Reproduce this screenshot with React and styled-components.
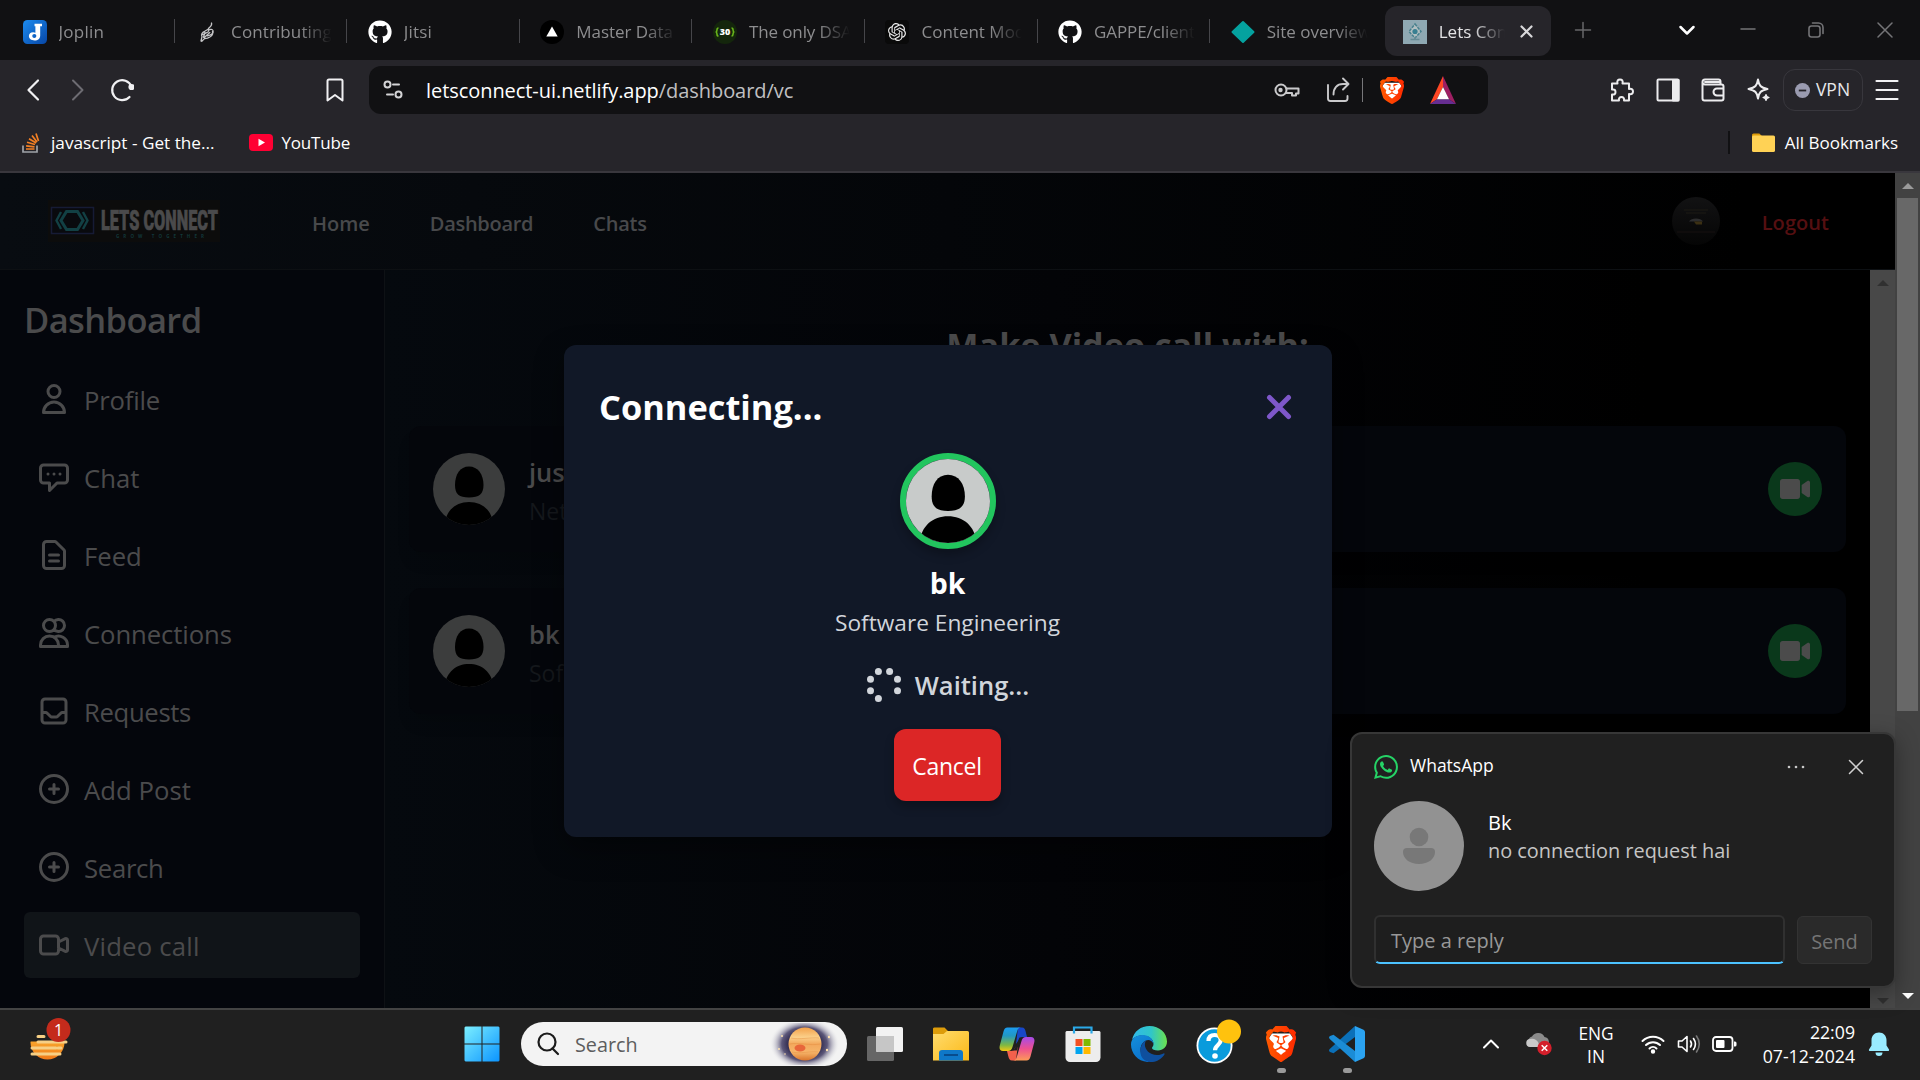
import React from "react";
import styled, { createGlobalStyle, css } from "styled-components";
import {
  HiOutlineUser,
  HiOutlineChatAlt,
  HiOutlineDocumentText,
  HiOutlineUsers,
  HiOutlineInbox,
  HiOutlinePlusCircle,
  HiOutlineVideoCamera,
} from "react-icons/hi";
import { FaVideo, FaGithub } from "react-icons/fa";
import { SiOpenai, SiBrave, SiWhatsapp } from "react-icons/si";

const Global = createGlobalStyle`
  *, *::before, *::after { box-sizing: border-box; }
  html, body { margin: 0; padding: 0; background: #000; overflow: hidden; }
  body { font-family: "Open Sans", "Noto Sans", sans-serif; }
  svg { display: block; flex: none; }
`;

const Screen = styled.div`
  position: relative;
  width: 1920px;
  height: 1080px;
  display: flex;
  flex-direction: column;
  overflow: hidden;
`;

const Label = styled.span`
  font-size: ${(p) => p.$size}px;
  font-weight: ${(p) => p.$weight || 400};
  letter-spacing: ${(p) => p.$track || 0}px;
  color: ${(p) => p.$color || "#fff"};
  line-height: ${(p) => p.$line || Math.round(p.$size * 1.4)}px;
  padding-top: ${(p) => p.$drop || 0}px;
  padding-bottom: ${(p) => p.$lift || 0}px;
  margin-right: ${(p) => p.$after || 0}px;
  white-space: nowrap;
`;

/* ---------- browser chrome ---------- */

const TabStrip = styled.div`
  height: 60px;
  flex: none;
  display: flex;
  align-items: flex-start;
  padding: 6px 0 0 2px;
  background: #111113;
`;

const Tab = styled.div`
  width: 172.6px;
  height: 50px;
  flex: none;
  display: flex;
  align-items: center;
  gap: 12px;
  padding: 1px 0 0 20.5px;
  position: relative;
  &::after {
    content: "";
    position: absolute;
    right: 0;
    top: 13px;
    width: 1px;
    height: 24px;
    background: ${(p) => (p.$last ? "transparent" : "#46464a")};
  }
`;

const ActiveTab = styled.div`
  width: 166px;
  height: 50px;
  flex: none;
  display: flex;
  align-items: center;
  gap: 12px;
  margin-left: 2px;
  padding: 1px 0 0 18px;
  border-radius: 12px;
  background: #26252a;
`;

const TabTitle = styled(Label)`
  width: ${(p) => p.$w}px;
  overflow: hidden;
  mask-image: linear-gradient(to right, #000 ${(p) => p.$w - 32}px, transparent);
`;

const WindowControls = styled.div`
  flex: 1;
  height: 47px;
  display: flex;
  align-items: center;
`;

const Control = styled.div`
  width: ${(p) => p.$w}px;
  margin-left: ${(p) => p.$before || 0}px;
  display: flex;
  justify-content: center;
`;

const Toolbar = styled.div`
  height: 60px;
  flex: none;
  display: flex;
  align-items: center;
  padding: 0 21px 0 22px;
  background: #26252a;
`;

const NavButtons = styled.div`
  width: 347px;
  display: flex;
  align-items: center;
  gap: 20px;
`;

const BookmarkButton = styled.div`
  margin-left: auto;
  margin-right: 22.5px;
`;

const AddressBar = styled.div`
  width: 1119px;
  height: 48px;
  display: flex;
  align-items: center;
  padding: 0 32px 0 14px;
  border-radius: 12px;
  background: #111113;
`;

const Url = styled.div`
  flex: 1;
  padding: 2px 0 0 23px;
`;

const AddressActions = styled.div`
  display: flex;
  align-items: center;
  gap: 26px;
`;

const ActionPair = styled.div`
  display: flex;
  align-items: center;
  gap: 17px;
`;

const Divider = styled.div`
  width: ${(p) => p.$w || 1}px;
  height: ${(p) => p.$h}px;
  margin-left: ${(p) => p.$shift || 0}px;
  background: ${(p) => p.$color};
`;

const ToolbarActions = styled.div`
  flex: 1;
  display: flex;
  align-items: center;
  justify-content: flex-end;
`;

const Extensions = styled.div`
  display: flex;
  gap: 21.5px;
  margin-right: 12px;
`;

const VpnButton = styled.div`
  width: 80px;
  height: 42px;
  display: flex;
  align-items: center;
  justify-content: center;
  gap: 6px;
  margin-right: 12.5px;
  border: 1px solid #38373d;
  border-radius: 12px;
`;

const BookmarksBar = styled.div`
  height: 53px;
  flex: none;
  display: flex;
  align-items: center;
  padding: 0 22px 6px 22px;
  background: #26252a;
  border-bottom: 2px solid #39373d;
`;

const Bookmark = styled.div`
  display: flex;
  align-items: center;
  gap: ${(p) => p.$gap}px;
  margin-right: ${(p) => p.$after || 0}px;
`;

const AllBookmarks = styled.div`
  margin-left: auto;
  display: flex;
  align-items: center;
  gap: 22px;
`;

/* ---------- web page ---------- */

const Page = styled.div`
  height: 835px;
  flex: none;
  display: flex;
`;

const Site = styled.div`
  position: relative;
  width: 1895px;
  display: flex;
  flex-direction: column;
`;

const SiteNav = styled.header`
  height: 97px;
  flex: none;
  display: flex;
  align-items: center;
  padding: 0 66px 0 48px;
  border-bottom: 1px solid #0d1013;
  background: linear-gradient(to right, #080c11, #040609 50%, #000 92%);
`;

const SiteLinks = styled.nav`
  display: flex;
  gap: 60px;
  margin-left: 92px;
  padding-top: 5px;
`;

const Account = styled.div`
  margin-left: auto;
  display: flex;
  align-items: center;
  gap: 42px;
`;

const SiteBody = styled.div`
  flex: 1;
  display: flex;
`;

const Sidebar = styled.aside`
  width: 385px;
  flex: none;
  padding: 23px 24px 0;
  background: #04060c;
  border-right: 1px solid #0e1115;
`;

const SidebarTitle = styled.h2`
  margin: 0 0 19px;
  height: 54px;
  font-size: 34.5px;
  font-weight: 600;
  line-height: 54px;
  letter-spacing: -0.6px;
  color: #4b4b4c;
`;

const Menu = styled.ul`
  margin: 0;
  padding: 0;
  list-style: none;
  display: flex;
  flex-direction: column;
  gap: 12px;
`;

const MenuItem = styled.li`
  height: 66px;
  display: flex;
  align-items: center;
  gap: 12px;
  padding-left: 12px;
  border-radius: 6px;
  color: #4b4b4c;
  background: ${(p) => (p.$active ? "#101418" : "transparent")};
`;

const Main = styled.main`
  width: 1485px;
  display: flex;
  flex-direction: column;
  align-items: center;
  padding: 46px 24px 0;
  background: linear-gradient(to right, #05090e, #030407 45%, #000 85%);
`;

const MainTitle = styled.h1`
  margin: 0 0 56px;
  padding-top: 2px;
  height: 54px;
  font-size: 34.2px;
  font-weight: 700;
  line-height: 54px;
  color: #4b4b4c;
  white-space: nowrap;
`;

const People = styled.div`
  align-self: stretch;
  display: flex;
  flex-direction: column;
  gap: 36px;
`;

const PersonCard = styled.div`
  height: 126px;
  display: flex;
  align-items: center;
  padding: 0 24px;
  border-radius: 12px;
  background: #04060b;
  box-shadow: 0 12px 16px -4px rgba(0, 0, 0, 0.15);
`;

const PersonText = styled.div`
  display: flex;
  flex-direction: column;
  margin-left: 24px;
  padding-top: 2px;
`;

const CallButton = styled.div`
  width: 54px;
  height: 54px;
  margin-left: auto;
  display: flex;
  align-items: center;
  justify-content: center;
  border-radius: 50%;
  color: #4b4b4b;
  background: #0a381b;
`;

const InnerScroll = styled.div`
  width: 25px;
  display: flex;
  flex-direction: column;
  align-items: center;
  justify-content: space-between;
  padding: 10px 0 4px;
  background: #484848;
`;

const OuterScroll = styled.div`
  width: 25px;
  display: flex;
  flex-direction: column;
  align-items: center;
  background: #424242;
`;

const ScrollThumb = styled.div`
  width: 21px;
  height: 513px;
  margin-top: 9px;
  background: #686868;
`;

const Arrow = styled.div`
  width: 0;
  height: 0;
  border: 6px solid transparent;
  ${(p) =>
    p.$down
      ? css`border-top-color: ${p.$color}; border-bottom-width: 0;`
      : css`border-bottom-color: ${p.$color}; border-top-width: 0;`}
  margin-top: ${(p) => p.$top || 0}px;
`;

/* ---------- call modal ---------- */

const ModalLayer = styled.div`
  position: absolute;
  inset: 0;
  display: flex;
  justify-content: center;
  align-items: flex-start;
  padding: 172px 0 0 1px;
`;

const Modal = styled.div`
  width: 768px;
  height: 492px;
  display: flex;
  flex-direction: column;
  align-items: center;
  padding: 35px 36px 0 35px;
  border-radius: 12px;
  background: #111827;
  box-shadow: 0 12px 30px rgba(0, 0, 0, 0.4);
`;

const ModalHead = styled.div`
  align-self: stretch;
  height: 54px;
  display: flex;
  align-items: center;
  justify-content: space-between;
  padding: 0 4px 0 0;
  margin-bottom: 19px;
`;

const AvatarRing = styled.div`
  width: 96px;
  height: 96px;
  margin-bottom: 13px;
  border: 6px solid #22c55e;
  border-radius: 50%;
  box-shadow: 0 6px 10px rgba(0, 0, 0, 0.25);
`;

const Waiting = styled.div`
  display: flex;
  align-items: center;
  gap: 13px;
  margin: 23.5px 0 24.5px;
  height: 40px;
`;

const CancelButton = styled.button`
  width: 107px;
  height: 72px;
  padding: 2px 0 0;
  margin-right: 1px;
  border: 0;
  border-radius: 12px;
  background: #dc2626;
  color: #fff;
  font-family: inherit;
  font-size: 23px;
  letter-spacing: -0.25px;
  box-shadow: 0 6px 10px rgba(0, 0, 0, 0.25);
`;

/* ---------- notification ---------- */

const Toast = styled.section`
  position: absolute;
  left: 1350px;
  top: 732px;
  width: 546px;
  height: 256px;
  display: flex;
  flex-direction: column;
  padding: 16px 22px 0 22px;
  border: 2px solid #373737;
  border-radius: 12px;
  background: #202020;
  box-shadow: 0 6px 22px rgba(0, 0, 0, 0.35);
`;

const ToastHead = styled.div`
  height: 33px;
  display: flex;
  align-items: center;
  gap: 12px;
  padding-right: 8px;
`;

const ToastActions = styled.div`
  margin-left: auto;
  display: flex;
  align-items: center;
  gap: 43px;
`;

const ToastBody = styled.div`
  height: 90px;
  display: flex;
  gap: 24px;
  margin-top: 18px;
`;

const ToastText = styled.div`
  display: flex;
  flex-direction: column;
  padding-top: 8px;
`;

const ToastReply = styled.div`
  height: 49px;
  margin-top: 24px;
  display: flex;
  gap: 12px;
`;

const ReplyInput = styled.div`
  width: 411px;
  display: flex;
  align-items: center;
  padding: 3px 0 0 15px;
  border: 2px solid #303030;
  border-bottom: 2px solid #4cc2ff;
  border-radius: 6px;
  background: #1e1e1e;
`;

const SendButton = styled.div`
  width: 75px;
  display: flex;
  align-items: center;
  justify-content: center;
  padding-top: 4px;
  margin-top: 1px;
  border: 1px solid #333;
  border-radius: 6px;
  background: #2a2a2a;
`;

/* ---------- taskbar ---------- */

const Taskbar = styled.footer`
  height: 72px;
  flex: none;
  display: flex;
  align-items: center;
  padding-bottom: 2px;
  border-top: 2px solid #434343;
  background: #202020;
`;

const Widgets = styled.div`
  width: 460px;
  padding: 0 0 2px 26px;
`;

const Apps = styled.div`
  display: flex;
  align-items: center;
  gap: 22px;
`;

const AppSlot = styled.div`
  position: relative;
  width: 44px;
  height: 68px;
  display: flex;
  align-items: center;
  justify-content: center;
  &::after {
    content: "";
    position: absolute;
    bottom: 5px;
    width: 9px;
    height: 5px;
    border-radius: 3px;
    background: ${(p) => (p.$running ? "#9a9a9a" : "transparent")};
  }
`;

const SearchBox = styled.div`
  width: 326px;
  height: 44px;
  display: flex;
  align-items: center;
  gap: 15px;
  margin: 0 -6px 0 -5px;
  padding: 0 7px 0 15px;
  border-radius: 22px;
  background: #f3f3f3;
`;

const SearchArt = styled.div`
  margin-left: auto;
`;

const Tray = styled.div`
  margin-left: auto;
  display: flex;
  align-items: center;
  padding-right: 18px;
`;

const TrayIcon = styled.div`
  width: ${(p) => p.$w}px;
  display: flex;
  justify-content: center;
`;

const TrayLines = styled.div`
  width: ${(p) => p.$w}px;
  padding-top: ${(p) => p.$drop || 0}px;
  display: flex;
  flex-direction: column;
  align-items: ${(p) => p.$align || "center"};
`;

/* ---------- drawings ---------- */

const Line = ({ size = 24, h, d, w = 2, color = "#e6e6e8", box, children }) => (
  <svg width={size} height={h || size} viewBox={box || `0 0 ${size} ${h || size}`} fill="none" stroke={color} strokeWidth={w} strokeLinecap="round" strokeLinejoin="round">
    {d && <path d={d} />}
    {children}
  </svg>
);

const Joplin = () => (
  <svg width="24" height="24" viewBox="0 0 24 24">
    <defs>
      <linearGradient id="jop" x1="0" y1="0" x2="1" y2="1"><stop offset="0" stopColor="#1c8cf0" /><stop offset="1" stopColor="#0746a6" /></linearGradient>
    </defs>
    <rect width="24" height="24" rx="4.500" fill="url(#jop)" />
    <path d="M11.5 3.700h7.500v2.600h-1.800v9.200c0 3-2.200 5-5.600 5-3.400 0-5.700-1.800-5.700-4.400 0-2.300 1.700-3.900 4.200-3.900 1 0 1.800.2 2.300.5V6.300h-.9z M9.300 16.100c0 1.200.9 1.900 2 1.900s2-.8 2-2-.8-1.900-2-1.900-2 .8-2 2z" fill="#fff" fillRule="evenodd" />
  </svg>
);

const JitsiMark = () => (
  <svg width="24" height="24" viewBox="0 0 24 24" fill="none" stroke="#c4c4c6" strokeWidth="1.300" strokeLinejoin="round" strokeLinecap="round">
    <path d="M16.500 3c.6 2-.2 3-1.800 4.200-1.400 1-2 2-1 3.500M13.600 10c2-1 4-.7 4.500.9.500 2.400-2.600 4.300-5.600 5M17.500 11.500c.8 3-1.700 5.500-5 6.700l-3 .4-2.700 2.600M6 21l1-4.400c-1.200-2 .2-4.200 2.700-5.300l3-1.800M10 12.500l-1.500 4.800M14.800 12.500l-5.500 5M8 14.600l5.300-2.800" />
  </svg>
);

const Triangle = () => (
  <svg width="24" height="24" viewBox="0 0 24 24"><circle cx="12" cy="12" r="12" fill="#000" /><path d="M12 6.500 17.700 16.500H6.300z" fill="#fff" /></svg>
);

const Thirty = () => (
  <svg width="24" height="24" viewBox="0 0 24 24">
    <circle cx="12" cy="12" r="12" fill="#14260c" />
    <path d="M5.500 8c-1.500 0-1.500.9-1.500 1.800 0 1.300 0 1.900-1.200 2.200C4 12.300 4 13 4 14.200c0 1 0 1.800 1.500 1.800M18.500 8c1.500 0 1.500.9 1.500 1.800 0 1.300 0 1.900 1.200 2.200C20 12.300 20 13 20 14.200c0 1 0 1.800-1.500 1.800" fill="none" stroke="#69b61b" strokeWidth="1.600" />
    <text x="12" y="15.200" textAnchor="middle" fontFamily="Open Sans, sans-serif" fontWeight="800" fontSize="9" fill="#fff">30</text>
  </svg>
);

const OpenAiTile = () => (
  <svg width="24" height="24" viewBox="0 0 24 24"><rect width="24" height="24" rx="4" fill="#0a0a0a" /><SiOpenai x="3" y="3" size={18} color="#e8e8e8" /></svg>
);

const Diamond = () => (
  <svg width="24" height="24" viewBox="0 0 24 24"><path d="M12 2 22.500 12 12 22 1.500 12z" fill="#05a29f" stroke="#05a29f" strokeWidth="2" strokeLinejoin="round" /></svg>
);

const SiteFavicon = () => (
  <svg width="24" height="24" viewBox="0 0 24 24">
    <rect width="24" height="24" fill="#8fa9b3" />
    <path d="M12 4 18 11.500 12 18 6 11.500z" fill="#b2bfc1" stroke="#47808d" strokeWidth="1.500" strokeDasharray="3 1" />
    <circle cx="12" cy="11.500" r="2.600" fill="#387f91" />
    <path d="M12 17v2M7.500 19.500h9" stroke="#668b95" strokeWidth="1.300" />
  </svg>
);

const BraveLion = ({ w, h, id }) => (
  <svg width={w} height={h} viewBox="2 0 20 24" preserveAspectRatio="none">
    <defs><linearGradient id={id}><stop offset="0" stopColor="#ff5a00" /><stop offset="1" stopColor="#ff2a00" /></linearGradient></defs>
    <path d="M6 5h12l2 3-2.500 10-5.500 4-5.500-4L4 8z" fill="#fff" />
    <SiBrave size={24} style={{ fill: `url(#${id})` }} />
  </svg>
);

const Bat = () => (
  <svg width="26" height="28" viewBox="0 0 27 28" preserveAspectRatio="none">
    <path d="M13.500 0 0 28l7.200-4.700L13.500 11z" fill="#ff4724" />
    <path d="M13.500 0 27 28l-7.200-4.700L13.500 11z" fill="#9e1f63" />
    <path d="M0 28h27l-7.200-4.700H7.200z" fill="#662d91" />
    <path d="M13.500 11 19.800 23.300H7.200z" fill="#fff" />
  </svg>
);

const YouTubeBadge = () => (
  <svg width="24" height="17" viewBox="0 0 24 17"><rect width="24" height="17" rx="4" fill="#ff0033" /><path d="M9.500 4.800 16 8.500l-6.500 3.700z" fill="#fff" /></svg>
);

const StackOverflow = () => (
  <svg width="18" height="20" viewBox="0 0 18 20" fill="none" strokeWidth="1.700">
    <path d="M1 12.500V19h14v-6.500" stroke="#9fa3a8" />
    <path d="M4 16h8.500M4.100 12.900l8.400.9M5 9.300l8 2.200M7 5.700l7.200 4.200M10 2.400l5 6.600M14 .5l2.500 7.500" stroke="#f48024" />
  </svg>
);

const Folder = ({ w, h }) => (
  <svg width={w} height={h} viewBox="0 0 22 19" preserveAspectRatio="none">
    <path d="M0 2a1.500 1.500 0 0 1 1.500-1.500H7L9.500 3H20v6H0z" fill="#dd9c0a" />
    <rect y="2.500" width="22" height="16.500" rx="1.500" fill="#ffd255" />
  </svg>
);

const Logo = () => (
  <svg width="172" height="42" viewBox="0 0 172 42">
    <rect width="172" height="42" fill="#0c0c0c" />
    <rect x="3.500" y="7.500" width="42" height="26" fill="#090a0e" stroke="#161b35" strokeWidth="1.500" />
    <g fill="none" stroke="#124044" strokeWidth="2.400">
      <path d="M18.500 11.500h11L35 20.500l-5.500 9h-11L13 20.500z" strokeWidth="3" />
      <path d="M13 12l-4.500 8.500L13 29M35 12l4.500 8.500L35 29" />
    </g>
    <text x="53" y="29.500" textLength="117" lengthAdjust="spacingAndGlyphs" fontFamily="Roboto, sans-serif" fontWeight="900" fontSize="28" fill="#4a4a4b" stroke="#4a4a4b" strokeWidth=".7">LETS CONNECT</text>
    <text x="68" y="37.500" textLength="88" fontFamily="Open Sans, sans-serif" fontWeight="700" fontSize="4.500" fill="#12383b">GROW TOGETHER</text>
  </svg>
);

const AccountPhoto = () => (
  <svg width="48" height="48" viewBox="0 0 48 48">
    <defs><linearGradient id="acc" x2="0" y2="1"><stop offset="0" stopColor="#121213" /><stop offset="1" stopColor="#050505" /></linearGradient></defs>
    <circle cx="24" cy="24" r="24" fill="url(#acc)" />
    <path d="M12 13h24M14 16h20" stroke="#1d1a14" />
    <path d="M17 24.500c2-4 12-4 14 0z" fill="#2d2d2e" />
    <path d="M22 24.500h8v3h-6z" fill="#3c3013" />
    <path d="M5 35h38" stroke="#171010" />
  </svg>
);

const Silhouette = ({ size, tone, id }) => (
  <svg width={size} height={size} viewBox="0 0 72 72">
    <clipPath id={id}><circle cx="36" cy="36" r="36" /></clipPath>
    <g clipPath={`url(#${id})`}>
      <rect width="72" height="72" fill={tone} />
      <path d="M36 13.500c9 0 14.500 8 14.500 18.500C50.500 41 46 44.500 36 44.500S22 41 22 32C22 21.500 27 13.500 36 13.500z" fill="#000" />
      <path d="M11.500 72C13 57 23 49 36 49s23 8 24.500 23z" fill="#000" />
    </g>
  </svg>
);

const Spinner = () => (
  <svg width="36" height="36" viewBox="-18 -18 36 36" fill="#d1d5db">
    {[[-5.600, -13.500], [5.600, -13.500], [-13.500, -5.700], [13.500, -5.700], [-13.500, 5.700], [13.500, 5.700], [-5.600, 13.500]].map(([x, y]) => (
      <circle key={`${x}${y}`} cx={x} cy={y} r="3.500" />
    ))}
  </svg>
);

const Contact = () => (
  <svg width="90" height="90" viewBox="0 0 90 90">
    <circle cx="45" cy="45" r="45" fill="#929292" />
    <circle cx="45" cy="36" r="9.300" fill="#787878" />
    <path d="M33 47h24a4 4 0 0 1 4 4c0 7-7 12-16 12s-16-5-16-12a4 4 0 0 1 4-4z" fill="#787878" />
  </svg>
);

const Weather = () => (
  <svg width="48" height="46" viewBox="0 0 48 46" overflow="visible">
    <defs><linearGradient id="sun" x2="0" y2="1"><stop offset="0" stopColor="#ffc83d" /><stop offset="1" stopColor="#f07a18" /></linearGradient></defs>
    <circle cx="21.500" cy="22.500" r="17" fill="url(#sun)" />
    <path d="M0 0h48v21.500H0z" fill="#202020" />
    <path d="M12 16.500h6M12 22h28M6 28h24M6 34h28" stroke="#f6cf85" strokeWidth="3" strokeLinecap="round" />
    <path d="M32 28h3" stroke="#f6cf85" strokeWidth="3" strokeLinecap="round" />
    <circle cx="32.500" cy="10" r="12" fill="#c42b1c" />
    <text x="32.500" y="16" textAnchor="middle" fontFamily="Open Sans, sans-serif" fontSize="16" fill="#fff">1</text>
  </svg>
);

const Windows = () => (
  <svg width="36" height="36" viewBox="0 0 36 36">
    <defs><linearGradient id="win" gradientUnits="userSpaceOnUse" x2="36" y2="36"><stop offset="0" stopColor="#7df0ff" /><stop offset="1" stopColor="#0a93ff" /></linearGradient></defs>
    <path d="M1.500.5H17.500V17.500H.5V1.500zM18.500.5H34.500L35.500 1.500V17.500H18.500zM.5 18.500H17.500V35.500H1.500L.5 34.500zM18.500 18.500H35.500V34.500L34.500 35.500H18.500z" fill="url(#win)" />
  </svg>
);

const Planet = () => (
  <svg width="70" height="42" viewBox="0 0 70 42">
    <defs>
      <radialGradient id="space"><stop offset="0.450" stopColor="#2f2a4f" /><stop offset="0.650" stopColor="#5c5779" /><stop offset="1" stopColor="#f3f3f3" stopOpacity="0" /></radialGradient>
      <linearGradient id="jup" x2="0" y2="1"><stop offset="0" stopColor="#f3a14a" /><stop offset="0.300" stopColor="#fbd08a" /><stop offset="0.500" stopColor="#f3a85c" /><stop offset="0.750" stopColor="#f6b56a" /><stop offset="1" stopColor="#d9752b" /></linearGradient>
    </defs>
    <ellipse cx="34.500" cy="21" rx="35" ry="26" fill="url(#space)" />
    <circle cx="35" cy="21" r="16.500" fill="url(#jup)" />
    <path d="M21 15c8 2 20-1 28 0M19.500 21c9-2 20 2 31 0M22 29c8 2 18-1 26 0" stroke="#e08a3c" strokeWidth="1" fill="none" opacity=".4" />
    <ellipse cx="30" cy="25" rx="5.500" ry="3.500" fill="#e8663a" />
    <g fill="#ffe2b0"><circle cx="12" cy="13" r="1" /><circle cx="59" cy="14" r="1.200" /><circle cx="57" cy="27" r="1.200" /><circle cx="9" cy="26" r="1" /><circle cx="15" cy="31" r=".8" /></g>
  </svg>
);

const TaskView = () => (
  <svg width="36" height="34" viewBox="0 0 36 34">
    <rect y="9" width="27" height="25" rx="1.500" fill="#666" />
    <rect x="9" width="27" height="25" rx="1.500" fill="#f2f2f2" />
    <path d="M9 9h18v16H10.500L9 23.500z" fill="#c6c6c6" />
  </svg>
);

const Explorer = () => (
  <svg width="36" height="34" viewBox="0 0 36 34">
    <defs><linearGradient id="exp" x2="1" y2="1"><stop offset="0" stopColor="#ffdc6e" /><stop offset="1" stopColor="#fbb917" /></linearGradient></defs>
    <path d="M0 1.500A1.500 1.500 0 0 1 1.500.5H11.500L15 4v5H0z" fill="#dd9c0a" />
    <path d="M0 7h10.500L14 4h20.500A1.500 1.500 0 0 1 36 5.500V33.500H0z" fill="url(#exp)" />
    <path d="M6 33.500V26a3 3 0 0 1 3-3H27a3 3 0 0 1 3 3v7.500z" fill="#0f78c8" />
    <path d="M11 28H25" stroke="#084c8d" strokeWidth="2" />
  </svg>
);

const Copilot = () => (
  <svg width="36" height="34" viewBox="0 0 36 34">
    <defs>
      <linearGradient id="cpA" x2="0" y2="1"><stop offset="0" stopColor="#1c9cf0" /><stop offset=".35" stopColor="#2198c4" /><stop offset=".75" stopColor="#7fb843" /><stop offset="1" stopColor="#f2c811" /></linearGradient>
      <linearGradient id="cpB" x2="0" y2="1"><stop offset="0" stopColor="#a54bea" /><stop offset=".5" stopColor="#ee5090" /><stop offset="1" stopColor="#fd9a57" /></linearGradient>
    </defs>
    <path d="M19 .5h4c2.500 0 3 2 3.500 3.500L28 10h-4c-2.500 0-3.500 1-4 3l-3 4z" fill="#1747c8" />
    <path d="M17 33.500h-4c-2.500 0-3-2-3.500-3.500L8 24h4c2.500 0 3.500-1 4-3l3-4z" fill="#f2604c" />
    <path d="M8.500.5H22c-2 0-3 1.200-3.600 3L13.500 20c-.8 2.600-2 4-4.500 4H4C1 24 0 21.500.8 18.500L4.500 4.500C5.200 2 6.300.5 8.500.5z" fill="url(#cpA)" />
    <path d="M27.500 33.500H14c2 0 3-1.200 3.600-3L22.500 14c.8-2.600 2-4 4.500-4h5c3 0 4 2.500 3.200 5.500l-3.700 14c-.7 2.500-1.800 4-4 4z" fill="url(#cpB)" />
    <path d="M20.500 10.500h3.200c-1.700.8-2.500 2-3 3.700L17.800 23.500h-4c1.300-.8 2-1.800 2.500-3.500z" fill="#202020" />
  </svg>
);

const Store = () => (
  <svg width="36" height="36" viewBox="0 0 36 36">
    <path d="M9 8V1.500H26.500V8" fill="none" stroke="#2ba9e8" strokeWidth="2.200" />
    <path d="M1.500 5H34.500L35.500 6V31.500a4.500 4.500 0 0 1-4.500 4.500H5A4.500 4.500 0 0 1 .5 31.500V6z" fill="#ededed" />
    <path d="M9 5V7.500M26.500 5V7.500" stroke="#2ba9e8" strokeWidth="2.200" />
    <path d="M10.500 13h7v7h-7z" fill="#f25022" /><path d="M18.500 13h7v7h-7z" fill="#7fba00" />
    <path d="M10.500 21h7v7h-7z" fill="#00a4ef" /><path d="M18.500 21h7v7h-7z" fill="#ffb900" />
  </svg>
);

const Edge = () => (
  <svg width="36" height="36" viewBox="0 0 36 36">
    <defs>
      <linearGradient id="edA"><stop offset="0" stopColor="#31b9ea" /><stop offset=".55" stopColor="#30c6c8" /><stop offset="1" stopColor="#6be24e" /></linearGradient>
      <linearGradient id="edB" x2=".6" y2="1"><stop offset="0" stopColor="#1590dc" /><stop offset="1" stopColor="#0a6fcb" /></linearGradient>
    </defs>
    <path d="M1 14C3 5 10 0 18.500 0 28.500 0 36 7 36 15.500c0 5.500-4 9-9 9-3.500 0-6-1-6-2.500 0-1 1.500-1.500 1.500-4C22.500 13 17.500 9.500 11.500 9.500 6.500 9.500 2.500 11.500 1 14z" fill="url(#edA)" />
    <path d="M0 18.500c0-6 5-9.500 11.500-9.500 7 0 11 4.500 11 9 0 0-1.500-4-5-4-4.500 0-8 4.500-8 9.500C9.500 30 14 35 20 36 8.500 37 0 28.500 0 18.500z" fill="url(#edB)" />
    <path d="M15 14.500c-3.500 5.500 1.500 14.500 11 14.500 3 0 5-.8 6.500-1.600 1-.4 1.400.5.9 1.200C30.500 33.500 25 36.500 19 36 12 35 8.500 29.500 9.500 23c.7-4.500 3-7.500 5.500-8.500z" fill="#0e4f9e" />
  </svg>
);

const Help = () => (
  <svg width="46" height="46" viewBox="0 0 46 46" overflow="visible">
    <circle cx="22.500" cy="24.500" r="18" fill="#fff" />
    <circle cx="22.500" cy="24.500" r="16.200" fill="#0a9bdc" />
    <path d="M16.500 20c0-4 2.500-6 6.200-6s6 2.200 6 5.300c0 4.700-5.700 4.700-5.700 10" fill="none" stroke="#fff" strokeWidth="4.200" />
    <circle cx="23" cy="35" r="2.800" fill="#fff" />
    <circle cx="37" cy="10.500" r="12" fill="#ffc20e" />
  </svg>
);

const VsCode = () => (
  <svg width="36" height="36" viewBox="0 0 36 36">
    <path d="M26 0v11L4.500 27.300 1 26c-1.300-1-1.300-2.200 0-3.200z" fill="#0b70b8" />
    <path d="M26 36V25L4.500 8.700 1 10c-1.300 1-1.300 2.200 0 3.200z" fill="#1b8cd6" />
    <path d="M26 0l8.500 3.800Q36 4.500 36 6v24q0 1.500-1.500 2.200L26 36z" fill="#2ba3f1" />
  </svg>
);

const Cloud = () => (
  <svg width="26" height="24" viewBox="0 0 26 24">
    <path d="M6 15a5.500 5.500 0 0 1 0-10.500A7 7 0 0 1 18.500 5 5 5 0 0 1 20 14.500z" fill="#8a8a8a" />
    <path d="M4 15a4 4 0 0 1 .5-8c3-1 6 .5 7.500 3l2 5z" fill="#c9c9c9" />
    <circle cx="18.500" cy="16" r="7.200" fill="#d41f2b" />
    <path d="M15.700 13.200l5.600 5.600M21.300 13.200l-5.600 5.600" stroke="#fff" strokeWidth="1.500" />
  </svg>
);

const Wifi = () => (
  <Line size={24} h={22} w={2} color="#fff">
    <path d="M1.500 8a15 15 0 0 1 21 0M5 12a10 10 0 0 1 14 0M8.500 15.500a5 5 0 0 1 7 0" />
    <circle cx="12" cy="18.500" r="1.200" fill="#fff" />
  </Line>
);

const Volume = () => (
  <Line size={24} h={22} w={1.600} color="#fff">
    <path d="M1.500 8v6h3.500l5 4.500v-15L5 8z" />
    <path d="M13.500 8c1.200 1.800 1.200 4.200 0 6M16.500 5.500c2.300 3.300 2.300 7.700 0 11" />
    <path d="M19.500 3c3.500 5 3.500 11 0 16" stroke="#777" />
  </Line>
);

const Battery = () => (
  <svg width="25" height="16" viewBox="0 0 25 16">
    <rect x="1" y="1" width="19.500" height="14" rx="3" fill="none" stroke="#fff" strokeWidth="1.800" />
    <rect x="4" y="4" width="8.500" height="8" rx="1" fill="#fff" />
    <path d="M22 5.500h1a1.500 1.500 0 0 1 1.500 1.500v2A1.500 1.500 0 0 1 23 10.500h-1z" fill="#fff" />
  </svg>
);

const Bell = () => (
  <svg width="22" height="24" viewBox="0 0 22 24" fill="#99ebff">
    <path d="M11 .5c4.500 0 7.500 3.500 7.500 7.500v5.500l2.500 4c.3.8 0 1.500-1 1.500H2c-1 0-1.300-.7-1-1.500l2.500-4V8C3.500 4 6.500.5 11 .5zM7.500 20.500h7a3.500 3.500 0 0 1-7 0z" />
  </svg>
);

/* ---------- data ---------- */

const tabs = [
  { title: "Joplin", icon: <Joplin />, track: 0.25 },
  { title: "Contributing", icon: <JitsiMark />, track: 0.1 },
  { title: "Jitsi", icon: <FaGithub size={24} color="#fff" />, track: 0.2 },
  { title: "Master Data", icon: <Triangle />, track: -0.05 },
  { title: "The only DSA", icon: <Thirty />, track: -0.1 },
  { title: "Content Mod", icon: <OpenAiTile />, track: 0 },
  { title: "GAPPE/client", icon: <FaGithub size={24} color="#fff" />, track: -0.1 },
  { title: "Site overview", icon: <Diamond />, track: 0 },
];

const menu = [
  { label: "Profile", Icon: HiOutlineUser, track: -0.2 },
  { label: "Chat", Icon: HiOutlineChatAlt, track: 0 },
  { label: "Feed", Icon: HiOutlineDocumentText, track: 0 },
  { label: "Connections", Icon: HiOutlineUsers, track: -0.1 },
  { label: "Requests", Icon: HiOutlineInbox, track: -0.35 },
  { label: "Add Post", Icon: HiOutlinePlusCircle, track: 0.05 },
  { label: "Search", Icon: HiOutlinePlusCircle, track: -0.3 },
  { label: "Video call", Icon: HiOutlineVideoCamera, track: 0.2, active: true },
];

const people = [
  { name: "jus", role: "Net" },
  { name: "bk", role: "Sof" },
];

export default function App() {
  return (
    <Screen>
      <Global />

      <TabStrip>
        {tabs.map((t, i) => (
          <Tab key={t.title} $last={i === tabs.length - 1}>
            {t.icon}
            <TabTitle $w={101} $size={17} $track={t.track} $color="#8d8d8f">{t.title}</TabTitle>
          </Tab>
        ))}
        <ActiveTab>
          <SiteFavicon />
          <TabTitle $w={66} $size={17} $color="#e4e4e6" $after={3}>Lets Con</TabTitle>
          <Line size={13} d="M1.500 1.500l10 10M11.500 1.500l-10 10" w={2.200} color="#d8d8da" />
        </ActiveTab>
        <WindowControls>
          <Control $w={64}><Line size={18} d="M9 1.500v15M1.500 9h15" w={1.500} color="#67676a" /></Control>
          <Control $w={68} $before={38}><Line size={18} d="M2.500 6l6.500 6.500L15.500 6" w={2.500} color="#fff" /></Control>
          <Control $w={54}><Line size={16} d="M1 7h14" w={1.500} color="#747477" /></Control>
          <Control $w={82}><Line size={16} w={1.600} color="#747477"><rect x="1" y="4" width="11" height="11" rx="2.500" /><path d="M4.500 1h6A4.500 4.500 0 0 1 15 5.500v6" /></Line></Control>
          <Control $w={56}><Line size={16} d="M1 1l14 14M15 1L1 15" w={1.500} color="#747477" /></Control>
        </WindowControls>
      </TabStrip>

      <Toolbar>
        <NavButtons>
          <Line size={24} d="M16 2.500L6.500 12l9.500 9.500" w={2.200} color="#f0f0f2" />
          <Line size={24} d="M7 2.500l9.500 9.500L7 21.500" w={2} color="#6d6c72" />
          <Line size={24} w={2.200} color="#f0f0f2">
            <path d="M19.500 19A10 10 0 1 1 21.500 8.500" />
            <circle cx="21.500" cy="9" r="2" fill="#f0f0f2" />
          </Line>
          <BookmarkButton><Line size={24} d="M4.500 3A1.500 1.500 0 0 1 6 1.500h12A1.500 1.500 0 0 1 19.500 3V22.500L12 17 4.500 22.500z" w={2} color="#f0f0f2" /></BookmarkButton>
        </NavButtons>
        <AddressBar>
          <Line size={20} w={2} color="#d4d4d6">
            <circle cx="4.500" cy="4.500" r="3" /><path d="M10 4.500h6" />
            <circle cx="15.500" cy="14.500" r="3" /><path d="M4 14.500h6" />
          </Line>
          <Url>
            <Label $size={20} $track={-0.06}>letsconnect-ui.netlify.app<Label $size={20} $track={-0.06} $color="#c0c0c2">/dashboard/vc</Label></Label>
          </Url>
          <AddressActions>
            <Line size={26} h={20} w={2} color="#c9c9cb">
              <circle cx="7" cy="10" r="5.500" /><circle cx="6.500" cy="10" r="1.200" fill="#c9c9cb" />
              <path d="M12.500 8.500h12v5h-2.500v2h-4v-2.500h-6" />
            </Line>
            <ActionPair>
              <Line size={24} h={26} w={1.900} color="#c9c9cb">
                <path d="M2 8v13.500A2.500 2.500 0 0 0 4.500 24H19a2.500 2.500 0 0 0 2.500-2.500V19M17 1.500l5.500 5.500L17 12.500M22 7h-5C11 7 7.500 11 7.500 17.500" />
              </Line>
              <Divider $h={24} $shift={-5} $color="#77777a" />
              <BraveLion w={24} h={27} id="lionBar" />
            </ActionPair>
            <Bat />
          </AddressActions>
        </AddressBar>
        <ToolbarActions>
          <Extensions>
            <Line size={24} w={2} color="#ececee" d="M2 5.500h5.500C6.800 2.500 8 1.500 10 1.500s3.200 1 2.500 4H19v5.500c3-.6 4 .8 4 2.500s-1 3.200-4 2.500V22.500h-5c.5-2.500-.8-3.500-2.500-3.500s-3 1-2.500 3.500H2v-6c2.500.5 3.500-.7 3.500-2.500s-1-3-3.500-2.500z" />
            <Line size={24} w={2} color="#ececee"><rect x="1.500" y="1.500" width="21" height="21" rx="1" /><path d="M17 2h5.500v20.500H17z" fill="#ececee" /></Line>
            <Line size={24} w={2} color="#ececee"><path d="M19.500 6V3.500a2 2 0 0 0-2-2H4A2.500 2.500 0 0 0 4 6.500h16.500a2 2 0 0 1 2 2v12a2 2 0 0 1-2 2H3.500a2 2 0 0 1-2-2V4M22.500 10.500H16a3.500 3.500 0 0 0 0 7h6.500M4 4h14" /></Line>
            <Line size={24} w={2} color="#ececee"><path d="M11 1.500c1 6 2.500 8 9.500 9.500-7 1.500-8.500 3.500-9.500 9.500C10 14.500 8.500 12.500 1.500 11 8.500 9.500 10 7.500 11 1.500z" /><path d="M19 16.500l.9 2.100 2.100.9-2.100.9-.9 2.100-.9-2.100-2.100-.9 2.100-.9z" fill="#ececee" strokeWidth="1.200" /></Line>
          </Extensions>
          <VpnButton>
            <svg width="15" height="15" viewBox="0 0 15 15"><circle cx="7.500" cy="7.500" r="7.500" fill="#9a9bb0" /><path d="M3.800 7.500h7.400" stroke="#26252a" strokeWidth="1.800" /></svg>
            <Label $size={17.500} $lift={1} $color="#e8e8ea">VPN</Label>
          </VpnButton>
          <Line size={24} d="M1.500 3h21M1.500 12h21M1.500 21h21" w={2.200} color="#f2f2f4" />
        </ToolbarActions>
      </Toolbar>

      <BookmarksBar>
        <Bookmark $gap={11} $after={34}><StackOverflow /><Label $size={17.200}>javascript - Get the...</Label></Bookmark>
        <Bookmark $gap={9}><YouTubeBadge /><Label $size={17} $track={-0.2}>YouTube</Label></Bookmark>
        <AllBookmarks>
          <Divider $w={2} $h={23} $color="#111113" />
          <Bookmark $gap={10}><Folder w={23} h={19} /><Label $size={17}>All Bookmarks</Label></Bookmark>
        </AllBookmarks>
      </BookmarksBar>

      <Page>
        <Site>
          <SiteNav>
            <Logo />
            <SiteLinks>
              <Label $size={20} $weight={600} $track={0} $color="#48494b">Home</Label>
              <Label $size={20} $weight={600} $track={-0.3} $color="#48494b">Dashboard</Label>
              <Label $size={20} $weight={600} $track={-0.2} $color="#48494b">Chats</Label>
            </SiteLinks>
            <Account>
              <AccountPhoto />
              <Label $size={20} $weight={600} $track={0.05} $drop={4} $color="#550f11">Logout</Label>
            </Account>
          </SiteNav>
          <SiteBody>
            <Sidebar>
              <SidebarTitle>Dashboard</SidebarTitle>
              <Menu>
                {menu.map(({ label, Icon, track, active }) => (
                  <MenuItem key={label} $active={active}>
                    <Icon size={36} />
                    <Label $size={25.700} $track={track} $drop={4} $color="inherit">{label}</Label>
                  </MenuItem>
                ))}
              </Menu>
            </Sidebar>
            <Main>
              <MainTitle>Make Video call with:</MainTitle>
              <People>
                {people.map((p, i) => (
                  <PersonCard key={p.name}>
                    <Silhouette size={72} tone="#3c3d3d" id={`person${i}`} />
                    <PersonText>
                      <Label $size={25.500} $weight={600} $line={42} $color="#4b4b4c">{p.name}</Label>
                      <Label $size={23} $line={36} $color="#15181c">{p.role}</Label>
                    </PersonText>
                    <CallButton><FaVideo size={30} /></CallButton>
                  </PersonCard>
                ))}
              </People>
            </Main>
            <InnerScroll>
              <Arrow $color="#303030" />
              <Arrow $down $color="#303030" />
            </InnerScroll>
          </SiteBody>
          <ModalLayer>
            <Modal>
              <ModalHead>
                <Label $size={34.400} $weight={700}>Connecting...</Label>
                <Line size={26} d="M3.500 3.500l19 19M22.500 3.500l-19 19" w={5} color="#7e57c9" />
              </ModalHead>
              <AvatarRing><Silhouette size={84} tone="#c8cbca" id="callee" /></AvatarRing>
              <Label $size={28.500} $weight={700} $line={43}>bk</Label>
              <Label $size={22.700} $line={36} $color="#d1d5db">Software Engineering</Label>
              <Waiting>
                <Spinner />
                <Label $size={25.500} $weight={600} $color="#d1d5db">Waiting...</Label>
              </Waiting>
              <CancelButton>Cancel</CancelButton>
            </Modal>
          </ModalLayer>
        </Site>
        <OuterScroll>
          <Arrow $color="#9a9a9a" $top={10} />
          <ScrollThumb />
          <Arrow $down $color="#fff" $top={282} />
        </OuterScroll>
      </Page>

      <Taskbar>
        <Widgets><Weather /></Widgets>
        <Apps>
          <AppSlot><Windows /></AppSlot>
          <SearchBox>
            <Line size={24} w={2.200} color="#1b1b1b"><circle cx="11" cy="10" r="8.500" /><path d="M16.500 16.500l5.500 5.500" /></Line>
            <Label $size={19.800} $drop={1} $color="#5d5d5d">Search</Label>
            <SearchArt><Planet /></SearchArt>
          </SearchBox>
          <AppSlot><TaskView /></AppSlot>
          <AppSlot><Explorer /></AppSlot>
          <AppSlot><Copilot /></AppSlot>
          <AppSlot><Store /></AppSlot>
          <AppSlot><Edge /></AppSlot>
          <AppSlot><Help /></AppSlot>
          <AppSlot $running><BraveLion w={30} h={36} id="lionTask" /></AppSlot>
          <AppSlot $running><VsCode /></AppSlot>
        </Apps>
        <Tray>
          <TrayIcon $w={40}><Line size={18} d="M2 12.500L9 5.500l7 7" w={2} color="#fff" /></TrayIcon>
          <TrayIcon $w={55}><Cloud /></TrayIcon>
          <TrayLines $w={60} $drop={1}>
            <Label $size={17.300} $line={23}>ENG</Label>
            <Label $size={17.300} $line={23}>IN</Label>
          </TrayLines>
          <TrayIcon $w={54}><Wifi /></TrayIcon>
          <TrayIcon $w={17}><Volume /></TrayIcon>
          <TrayIcon $w={54}><Battery /></TrayIcon>
          <TrayLines $w={104} $align="flex-end">
            <Label $size={17.700} $line={24}>22:09</Label>
            <Label $size={17.700} $line={24}>07-12-2024</Label>
          </TrayLines>
          <TrayIcon $w={47}><Bell /></TrayIcon>
        </Tray>
      </Taskbar>

      <Toast>
        <ToastHead>
          <SiWhatsapp size={24} color="#25d366" />
          <Label $size={17.500} $lift={2}>WhatsApp</Label>
          <ToastActions>
            <svg width="18" height="4" viewBox="0 0 18 4" fill="#c8c8c8"><circle cx="2" cy="2" r="1.300" /><circle cx="9" cy="2" r="1.300" /><circle cx="16" cy="2" r="1.300" /></svg>
            <Line size={16} d="M1.500 1.500l13 13M14.500 1.500l-13 13" w={1.500} color="#d0d0d0" />
          </ToastActions>
        </ToastHead>
        <ToastBody>
          <Contact />
          <ToastText>
            <Label $size={20} $line={28}>Bk</Label>
            <Label $size={19.900} $line={28} $color="#c5c5c5">no connection request hai</Label>
          </ToastText>
        </ToastBody>
        <ToastReply>
          <ReplyInput><Label $size={20} $color="#989898">Type a reply</Label></ReplyInput>
          <SendButton><Label $size={20} $color="#757575">Send</Label></SendButton>
        </ToastReply>
      </Toast>
    </Screen>
  );
}
